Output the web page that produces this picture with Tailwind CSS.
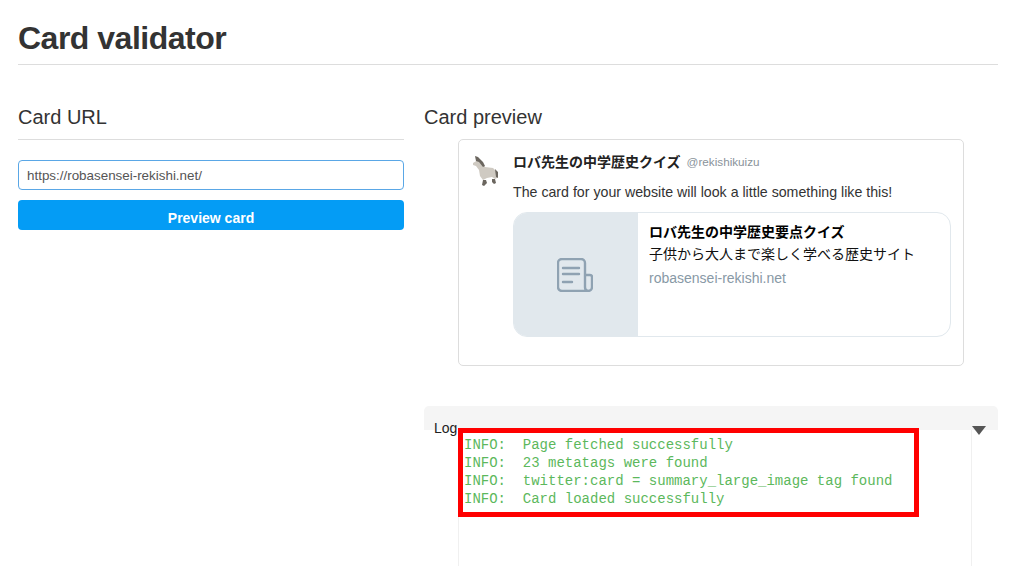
<!DOCTYPE html>
<html lang="en">
<head>
    <meta charset="UTF-8">
    <title>Card validator</title>
    <script src="https://cdn.jsdelivr.net/npm/@tailwindcss/browser@4"></script>
</head>
<body class="bg-white h-[566px] overflow-hidden font-['Liberation_Sans','Noto_Sans_CJK_JP',sans-serif] text-[#333]">
    <div class="pl-[18px] pr-[38px]">
        <!-- Title -->
        <div class="h-[65px] border-b border-[#ddd] flex items-end pb-[4px]">
            <h1 class="text-[32px] leading-[44px] font-bold tracking-[-0.5px]">Card validator</h1>
        </div>

        <div class="flex gap-5 mt-[38px]">
            <!-- Left column -->
            <div class="w-[386px] shrink-0">
                <h2 class="h-[37px] border-b border-[#ddd] text-[20px] leading-[28px]">Card URL</h2>
                <input value="https://robasensei-rekishi.net/" class="mt-[20px] block w-full h-[30px] px-2 text-[13.400px] text-[#555] border border-[#5aa7e6] rounded-[4px] outline-none">
                <button class="mt-[10px] block w-full h-[30px] pt-[6px] bg-[#049cf5] rounded-[4px] text-white text-[14px] font-bold">Preview card</button>
            </div>

            <!-- Right column -->
            <div class="flex-1">
                <h2 class="text-[20px] leading-[28px] h-[37px] -mb-[1px]">Card preview</h2>
                <div class="ml-[34px] w-[506px] h-[227px] border border-[#ddd] rounded-[5px] pl-[13px] pr-[12px] pt-[11px]">
                    <div class="flex">
                        <div class="w-[28px] h-[28px] mt-[4px] mr-[13px] shrink-0">
                            <svg viewBox="0 0 28 32" class="w-[28px] h-[32px] blur-[0.4px]">
                                <path fill="#cfcac2" d="M1 8l5-3 4 2 3 5 8 1 4 4 0 6-2 1-3-2-5 1-4 2-3-4-1-6-3-4-3-1z"/>
                                <path fill="#6b665f" d="M3 1l3 1 5 5 2 4-2 1-4-5-3-1zM11 25l3 0 1 3-3 3-2-1zM20 24l3 0 1 4-2 1-2-2zM23 14l3 3 0 6-2-1z"/>
                            </svg>
                        </div>
                        <div class="flex-1">
                            <div class="h-[22px] flex items-center">
                                <span class="text-[14px] font-bold text-[#222]">ロバ先生の中学歴史クイズ</span>
                                <span class="ml-[6px] text-[11.700px] text-[#8a939b]">@rekishikuizu</span>
                            </div>
                            <p class="mt-[10px] text-[14.200px] leading-[18px] text-[#333]">The card for your website will look a little something like this!</p>
                            <div class="mt-[11px] flex h-[125px] border border-[#e1e8ed] rounded-[14px] overflow-hidden">
                                <div class="w-[125px] pr-[2px] bg-[#e1e8ed] flex items-center justify-center shrink-0 -my-px -ml-px">
                                    <svg viewBox="0 0 36 34" class="w-[36px] h-[34px]" fill="none" stroke="#8fa2b2" stroke-width="2.400" stroke-linecap="round" stroke-linejoin="round">
                                        <path d="M28 17h5a2 2 0 0 1 2 2v10a4 4 0 0 1-4 4H5a4 4 0 0 1-4-4V5a4 4 0 0 1 4-4h19a4 4 0 0 1 4 4v24a4 4 0 0 0 3 4"/>
                                        <path d="M6 10h16M6 16h16M6 24h9"/>
                                    </svg>
                                </div>
                                <div class="pl-[11px] pt-[9px]">
                                    <div class="text-[14px] leading-[20px] font-bold text-black">ロバ先生の中学歴史要点クイズ</div>
                                    <div class="text-[14px] leading-[20px] mt-[2px] text-[#111]">子供から大人まで楽しく学べる歴史サイト</div>
                                    <div class="text-[14px] leading-[20px] mt-[4px] text-[#8899a6]">robasensei-rekishi.net</div>
                                </div>
                            </div>
                        </div>
                    </div>
                </div>

                <!-- Log -->
                <div class="relative mt-[40px]">
                    <div class="relative h-[24px] bg-[#f5f5f5] rounded-t-[5px]">
                        <span class="absolute left-[10px] top-[13px] text-[14px] leading-[18px] text-[#222]">Log</span>
                        <span class="absolute left-[548px] top-[20px] w-0 h-0 border-x-[7px] border-x-transparent border-t-[9px] border-t-[#555]"></span>
                    </div>
                    <div class="ml-[34px] w-[514px] h-[136px] border-x border-[#f0f0f0]"></div>
                    <!-- red annotation box sits over the log panel -->
                    <div class="absolute left-[34px] top-[22px] w-[461px] h-[89px] border-[5px] border-[#ff0000] bg-white pl-[1px] pt-[3px] font-['Liberation_Mono',monospace] text-[14px] leading-[18px] text-[#5cb85c]">
                        <div class="whitespace-pre">INFO:  Page fetched successfully</div>
                        <div class="whitespace-pre">INFO:  23 metatags were found</div>
                        <div class="whitespace-pre">INFO:  twitter:card = summary_large_image tag found</div>
                        <div class="whitespace-pre">INFO:  Card loaded successfully</div>
                    </div>
                </div>
            </div>
        </div>
    </div>
</body>
</html>
